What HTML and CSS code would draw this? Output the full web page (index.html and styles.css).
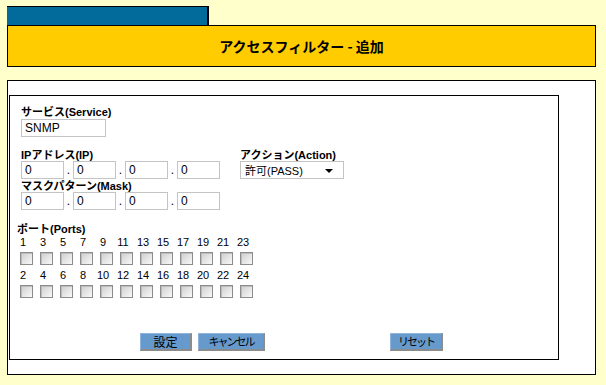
FILE: index.html
```html
<html>
  <head>
    <title>アクセスフィルター - 追加</title>
    <meta charset="utf-8">
    <link rel="stylesheet" href="styles.css">
  </head>

  <body>
    <div class="tab"></div>
    <div class="title">アクセスフィルター - 追加</div>

    <div class="panel">
      <div class="form">
        <div class="label">サービス(Service)</div>
        <input type="text" class="txt service" value="SNMP">

        <div class="addr">
          <div class="addr-left">
            <div class="label">IPアドレス(IP)</div>
            <div class="octets">
              <input type="text" class="txt octet" value="0"><span class="dot">.</span><input type="text" class="txt octet" value="0"><span class="dot">.</span><input type="text" class="txt octet" value="0"><span class="dot">.</span><input type="text" class="txt octet" value="0">
            </div>
            <div class="label mask-label">マスクパターン(Mask)</div>
            <div class="octets">
              <input type="text" class="txt octet" value="0"><span class="dot">.</span><input type="text" class="txt octet" value="0"><span class="dot">.</span><input type="text" class="txt octet" value="0"><span class="dot">.</span><input type="text" class="txt octet" value="0">
            </div>
          </div>
          <div class="addr-right">
            <div class="label">アクション(Action)</div>
            <div class="select"><span>許可(PASS)</span><span class="arrow"></span></div>
          </div>
        </div>

        <div class="label ports-label">ポート(Ports)</div>
        <div class="ports">
          <div class="port"><span class="num">1</span><input type="checkbox" class="chk"></div>
          <div class="port"><span class="num">3</span><input type="checkbox" class="chk"></div>
          <div class="port"><span class="num">5</span><input type="checkbox" class="chk"></div>
          <div class="port"><span class="num">7</span><input type="checkbox" class="chk"></div>
          <div class="port"><span class="num">9</span><input type="checkbox" class="chk"></div>
          <div class="port"><span class="num">11</span><input type="checkbox" class="chk"></div>
          <div class="port"><span class="num">13</span><input type="checkbox" class="chk"></div>
          <div class="port"><span class="num">15</span><input type="checkbox" class="chk"></div>
          <div class="port"><span class="num">17</span><input type="checkbox" class="chk"></div>
          <div class="port"><span class="num">19</span><input type="checkbox" class="chk"></div>
          <div class="port"><span class="num">21</span><input type="checkbox" class="chk"></div>
          <div class="port"><span class="num">23</span><input type="checkbox" class="chk"></div>
          <div class="port"><span class="num">2</span><input type="checkbox" class="chk"></div>
          <div class="port"><span class="num">4</span><input type="checkbox" class="chk"></div>
          <div class="port"><span class="num">6</span><input type="checkbox" class="chk"></div>
          <div class="port"><span class="num">8</span><input type="checkbox" class="chk"></div>
          <div class="port"><span class="num">10</span><input type="checkbox" class="chk"></div>
          <div class="port"><span class="num">12</span><input type="checkbox" class="chk"></div>
          <div class="port"><span class="num">14</span><input type="checkbox" class="chk"></div>
          <div class="port"><span class="num">16</span><input type="checkbox" class="chk"></div>
          <div class="port"><span class="num">18</span><input type="checkbox" class="chk"></div>
          <div class="port"><span class="num">20</span><input type="checkbox" class="chk"></div>
          <div class="port"><span class="num">22</span><input type="checkbox" class="chk"></div>
          <div class="port"><span class="num">24</span><input type="checkbox" class="chk"></div>
        </div>

        <div class="buttons">
          <input type="button" class="btn btn-set" value="設定">
          <input type="button" class="btn btn-cancel kana" value="キャンセル">
          <input type="button" class="btn btn-reset kana" value="リセット">
        </div>
      </div>
    </div>
  </body>
</html>
```

FILE: styles.css
```css
html {
  background-color: #ffffcc;
}

body {
  margin: 0;
  padding: 6px 10px 0 7px;
  font-family: "Liberation Sans", "Noto Sans CJK JP", sans-serif;
  font-size: 11px;
  color: #000;
}

.tab {
  width: 200px;
  height: 18px;
  background-color: #036a9c;
  border-top: 1px solid #000;
  border-right: 2px solid #000;
}

.title {
  height: 40px;
  border: 1px solid #000;
  background-color: #ffcc00;
  display: flex;
  align-items: center;
  justify-content: center;
  font-family: "Noto Sans CJK JP", sans-serif;
  font-size: 14px;
  font-weight: bold;
}

.panel {
  margin-top: 13px;
  height: 295px;
  box-sizing: border-box;
  border: 1px solid #000;
  background-color: #fff;
  padding: 14px 36px 0 1px;
}

.form {
  height: 265px;
  box-sizing: border-box;
  border: 1px solid #000;
  padding: 10px 0 0 11px;
}

.label {
  font-weight: bold;
  line-height: 12px;
  height: 12px;
  white-space: nowrap;
}

.txt {
  display: block;
  box-sizing: border-box;
  height: 18px;
  margin: 0;
  padding: 0 3px;
  border: 1px solid #c4c4c4;
  background: #fff;
  font-family: "Liberation Sans", sans-serif;
  font-size: 12px;
  color: #000;
  outline: none;
}

.service {
  width: 85px;
  margin-top: 1px;
}

.addr {
  display: flex;
  margin-top: 12px;
}

.addr-left {
  margin-right: 20px;
}

.octets {
  display: flex;
}

.octet {
  width: 43px;
}

.dot {
  width: 9px;
  text-align: center;
  font-size: 12px;
  line-height: 18px;
}

.mask-label {
  margin-top: 1px;
}

.select {
  width: 104px;
  height: 18px;
  box-sizing: border-box;
  border: 1px solid #c4c4c4;
  display: flex;
  align-items: center;
  justify-content: space-between;
  padding: 0 10px 0 4px;
  font-family: "Liberation Sans", "Noto Sans CJK JP", sans-serif;
  font-size: 11px;
}

.arrow {
  width: 0;
  height: 0;
  border-style: solid;
  border-width: 4px 4px 0 4px;
  border-color: #000 transparent transparent transparent;
  margin-top: 2px;
}

.ports-label {
  margin-top: 13px;
  margin-left: -4px;
}

.ports {
  display: grid;
  grid-template-columns: repeat(12, 13px);
  column-gap: 7px;
  margin-top: 1px;
  margin-left: -1px;
}

.port {
  display: flex;
  flex-direction: column;
  align-items: flex-start;
}

.num {
  width: 6px;
  display: flex;
  justify-content: center;
  line-height: 12px;
  font-size: 11px;
  white-space: nowrap;
}

.chk {
  -webkit-appearance: none;
  appearance: none;
  width: 13px;
  height: 13px;
  margin: 4px 0 4px 0;
  box-sizing: border-box;
  border: 1px solid #8c8c8c;
  background: linear-gradient(135deg, #cfcfcf, #f8f8f8);
  box-shadow: inset 1px 1px 0 #bdbdbd;
}

.buttons {
  display: flex;
  margin-top: 31px;
  margin-left: 119px;
}

.btn {
  height: 18px;
  box-sizing: border-box;
  margin: 0;
  padding: 0;
  border-top: 1px solid #8fb5dc;
  border-left: 1px solid #8fb5dc;
  border-right: 2px solid #8c8c8c;
  border-bottom: 2px solid #8c8c8c;
  background-color: #6699cc;
  color: #000;
  font-family: "Noto Sans CJK JP", sans-serif;
  font-size: 12px;
  line-height: 1;
}

.kana {
  font-size: 11px;
  letter-spacing: -2px;
}

.btn-set {
  width: 52px;
}

.btn-cancel {
  width: 67px;
  margin-left: 6px;
}

.btn-reset {
  width: 53px;
  margin-left: 125px;
}
```
